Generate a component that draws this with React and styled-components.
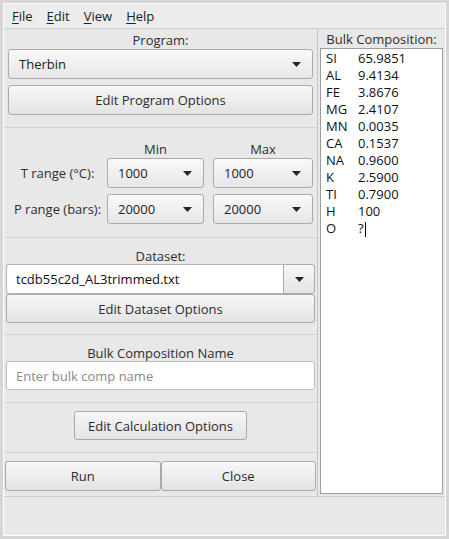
import React from 'react';
import styled, {createGlobalStyle} from 'styled-components';

const GlobalStyle = createGlobalStyle`
  html, body {
    margin: 0;
    padding: 0;
    background: #d6d6d6;
  }
  body {
    font-family: "Open Sans", "DejaVu Sans", sans-serif;
    font-size: 13px;
    color: #2b2b2b;
  }
`;

const composition = [
  ['SI', '65.9851'],
  ['AL', '9.4134'],
  ['FE', '3.8676'],
  ['MG', '2.4107'],
  ['MN', '0.0035'],
  ['CA', '0.1537'],
  ['NA', '0.9600'],
  ['K', '2.5900'],
  ['TI', '0.7900'],
  ['H', '100'],
  ['O', '?'],
];

function Arrow() {
  return (
    <svg width="9" height="5" viewBox="0 0 9 5">
      <path d="M0 0 L9 0 L4.5 5 Z" fill="#262626" />
    </svg>
  );
}

function Combo({value}) {
  return (
    <ComboBox>
      <span>{value}</span>
      <Arrow />
    </ComboBox>
  );
}

function Mnemonic({text}) {
  return (
    <MenuItem>
      <u>{text[0]}</u>
      {text.slice(1)}
    </MenuItem>
  );
}

export default function App() {
  return (
    <>
      <GlobalStyle />
      <Frame>
        <Window>
          <MenuBar>
            <Mnemonic text="File" />
            <Mnemonic text="Edit" />
            <Mnemonic text="View" />
            <Mnemonic text="Help" />
          </MenuBar>

          <Split>
            <LeftPane>
              <Section $pt={2} $pb={12} $px={4}>
                <Label $h={18}>Program:</Label>
                <Combo value="Therbin" />
                <Button $h={30} $mt={6}>Edit Program Options</Button>
              </Section>

              <Section $pt={12} $pb={13} $px={4}>
                <RangeGrid>
                  <span />
                  <Label $h={18}>Min</Label>
                  <MaxCell><Label $h={18}>Max</Label></MaxCell>

                  <RowLabel>T range (°C):</RowLabel>
                  <Combo value="1000" />
                  <MaxCell><Combo value="1000" /></MaxCell>

                  <RowLabel>P range (bars):</RowLabel>
                  <Combo value="20000" />
                  <MaxCell><Combo value="20000" /></MaxCell>
                </RangeGrid>
              </Section>

              <Section $pt={10} $pb={11} $px={2}>
                <Label $h={16}>Dataset:</Label>
                <EditCombo>
                  <EditField>tcdb55c2d_AL3trimmed.txt</EditField>
                  <DropButton><Arrow /></DropButton>
                </EditCombo>
                <Button $h={29}>Edit Dataset Options</Button>
              </Section>

              <Section $pt={10} $pb={12} $px={2}>
                <Label $h={16}>Bulk Composition Name</Label>
                <TextInput placeholder="Enter bulk comp name" />
              </Section>

              <Section $pt={8} $pb={12} $px={2}>
                <Button $h={29} $w={173} $center>Edit Calculation Options</Button>
              </Section>

              <Section $pt={8} $pb={5} $px={1} $last>
                <ButtonRow>
                  <Button $h={30} $grow>Run</Button>
                  <Button $h={30} $grow>Close</Button>
                </ButtonRow>
              </Section>
            </LeftPane>

            <RightPane>
              <Label $h={18}>Bulk Composition:</Label>
              <CompArea>
                {composition.map(([el, val], i) => (
                  <CompRow key={el}>
                    <span>{el}</span>
                    <span>
                      {val}
                      {i === composition.length - 1 && <Caret />}
                    </span>
                  </CompRow>
                ))}
              </CompArea>
            </RightPane>
          </Split>

          <StatusArea />
        </Window>
      </Frame>
    </>
  );
}

const Frame = styled.div`
  padding: 3px;
  width: 449px;
  height: 539px;
  box-sizing: border-box;
  background: #d6d6d6;
`;

const Window = styled.div`
  box-sizing: border-box;
  width: 443px;
  height: 533px;
  border: 1px solid #fdfdfd;
  background: #e8e8e8;
  display: flex;
  flex-direction: column;
`;

const MenuBar = styled.div`
  flex: none;
  height: 24px;
  border-bottom: 1px solid #cfcfcf;
  background: #ececec;
  display: flex;
  align-items: center;
  gap: 14px;
  padding-left: 8px;
  color: #222;
`;

const MenuItem = styled.span`
  u {
    text-decoration: underline;
    text-underline-offset: 2px;
  }
`;

const Split = styled.div`
  flex: none;
  height: 467px;
  display: flex;
  border-bottom: 1px solid #cdcdcd;
`;

const LeftPane = styled.div`
  width: 313px;
  border-right: 1px solid #c6c6c6;
  display: flex;
  flex-direction: column;
`;

const Section = styled.div`
  flex: none;
  padding: ${p => p.$pt}px ${p => p.$px}px ${p => p.$pb}px;
  border-bottom: ${p => (p.$last ? 'none' : '1px solid #d2d2d2')};
  display: flex;
  flex-direction: column;
`;

const Label = styled.div`
  flex: none;
  height: ${p => p.$h}px;
  line-height: ${p => p.$h}px;
  text-align: center;
  color: #2e2e2e;
`;

const ComboBox = styled.div`
  flex: none;
  box-sizing: border-box;
  height: 30px;
  border: 1px solid #ababab;
  border-radius: 3px;
  background: linear-gradient(#f9f9f9, #e6e6e6);
  display: flex;
  align-items: center;
  justify-content: space-between;
  padding: 0 11px 0 10px;
  color: #222;
`;

const Button = styled.div`
  box-sizing: border-box;
  height: ${p => p.$h}px;
  width: ${p => (p.$w ? `${p.$w}px` : 'auto')};
  align-self: ${p => (p.$center ? 'center' : 'stretch')};
  margin-top: ${p => p.$mt || 0}px;
  flex: ${p => (p.$grow ? '1 1 0' : 'none')};
  border: 1px solid #a9a9a9;
  border-radius: 3px;
  background: linear-gradient(#f7f7f7, #e3e3e3);
  display: flex;
  align-items: center;
  justify-content: center;
  color: #2b2b2b;
`;

const RangeGrid = styled.div`
  display: grid;
  grid-template-columns: 99px 97px 1fr;
  grid-template-rows: 18px 30px 36px;
  align-items: end;
`;

const MaxCell = styled.div`
  margin-left: 9px;
`;

const RowLabel = styled.div`
  height: 30px;
  line-height: 30px;
  text-align: center;
  color: #2e2e2e;
`;

const EditCombo = styled.div`
  flex: none;
  height: 30px;
  display: flex;
`;

const EditField = styled.div`
  flex: 1;
  box-sizing: border-box;
  background: #fff;
  border: 1px solid #b5b5b5;
  border-right: none;
  border-radius: 3px 0 0 3px;
  display: flex;
  align-items: center;
  padding-left: 9px;
  color: #111;
`;

const DropButton = styled.div`
  width: 32px;
  box-sizing: border-box;
  border: 1px solid #ababab;
  border-radius: 0 3px 3px 0;
  background: linear-gradient(#f7f7f7, #e4e4e4);
  display: flex;
  align-items: center;
  justify-content: center;
`;

const TextInput = styled.input`
  flex: none;
  box-sizing: border-box;
  height: 29px;
  border: 1px solid #bdbdbd;
  border-radius: 3px;
  background: #fff;
  padding: 0 9px;
  font-family: inherit;
  font-size: 13px;
  outline: none;
  margin: 0;

  &::placeholder {
    color: #8a8a8a;
  }
`;

const ButtonRow = styled.div`
  display: flex;
  height: 30px;
`;

const RightPane = styled.div`
  flex: 1;
  display: flex;
  flex-direction: column;
  padding: 1px 2px 2px 2px;
`;

const CompArea = styled.div`
  flex: 1;
  background: #fff;
  border: 1px solid #9d9d9d;
  padding: 1px 5px;
  color: #111;
`;

const CompRow = styled.div`
  display: grid;
  grid-template-columns: 32px 1fr;
  height: 17px;
  line-height: 17px;
`;

const Caret = styled.span`
  display: inline-block;
  width: 1px;
  height: 15px;
  background: #000;
  vertical-align: middle;
  margin-left: 1px;
`;

const StatusArea = styled.div`
  flex: 1;
`;
